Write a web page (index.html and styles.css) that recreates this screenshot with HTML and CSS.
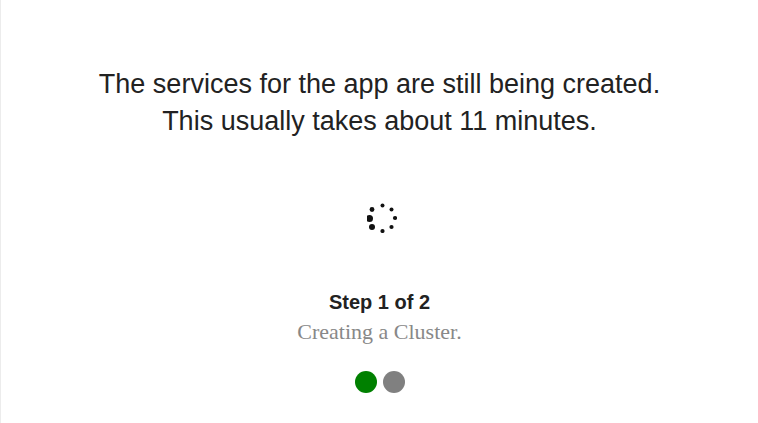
FILE: index.html
```html
<!DOCTYPE html>
<html>
<head>
<meta charset="utf-8">
<link rel="stylesheet" href="styles.css">
</head>
<body>
<div class="page">
  <p class="message">The services for the app are still being created.<br>This usually takes about 11 minutes.</p>
  <div class="spinner">
    <svg width="30" height="30" viewBox="0 0 30 30">
      <circle cx="15.5" cy="2.5" r="2" fill="#111"/>
      <circle cx="24.5" cy="6.5" r="2" fill="#111"/>
      <circle cx="28" cy="15" r="2.1" fill="#111"/>
      <circle cx="24.5" cy="24" r="2.1" fill="#111"/>
      <circle cx="15.5" cy="28" r="2.1" fill="#111"/>
      <circle cx="5" cy="24" r="3" fill="#111"/>
      <circle cx="2.5" cy="15.5" r="3.5" fill="#111"/>
      <circle cx="5" cy="6.5" r="2.4" fill="#111"/>
    </svg>
  </div>
  <div class="step">Step 1 of 2</div>
  <div class="step-desc">Creating a Cluster.</div>
  <div class="dots">
    <span class="dot dot-done"></span>
    <span class="dot dot-todo"></span>
  </div>
</div>
</body>
</html>
```
FILE: styles.css
```css
html, body {
  margin: 0;
  padding: 0;
  background: #fff;
}
.page {
  height: 423px;
  box-sizing: border-box;
  border-left: 1px solid #ececec;
  display: flex;
  flex-direction: column;
  align-items: center;
  padding-top: 66px;
}
.message {
  margin: 0;
  font-family: "Liberation Sans", Arial, sans-serif;
  font-size: 27px;
  line-height: 37px;
  color: #222;
  text-align: center;
}
.spinner {
  margin-top: 63px;
  margin-left: 4px;
  width: 30px;
  height: 30px;
}
.spinner svg {
  display: block;
}
.step {
  margin-top: 58px;
  font-family: "Liberation Sans", Arial, sans-serif;
  font-weight: bold;
  font-size: 20px;
  line-height: 22px;
  color: #222;
}
.step-desc {
  margin-top: 7px;
  font-family: "Liberation Serif", "Times New Roman", serif;
  font-size: 22px;
  line-height: 24px;
  color: #888;
}
.dots {
  margin-top: 27px;
  display: flex;
  gap: 6px;
}
.dot {
  width: 22px;
  height: 22px;
  border-radius: 50%;
}
.dot-done {
  background: #008000;
}
.dot-todo {
  background: #808080;
}
```
